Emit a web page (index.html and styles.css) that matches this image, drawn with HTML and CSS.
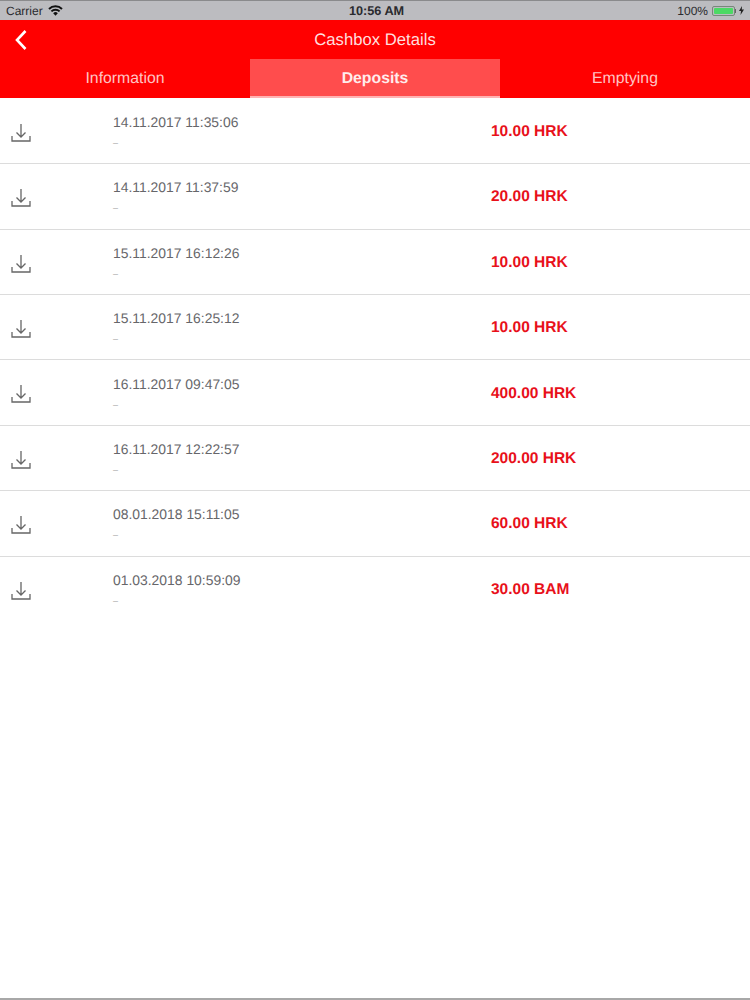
FILE: index.html
```html
<!DOCTYPE html>
<html lang="en">
<head>
    <meta charset="UTF-8">
    <title>Cashbox Details</title>
    <link rel="stylesheet" href="styles.css">
</head>
<body>
    <!-- Status bar -->
    <div class="status-bar">
        <div class="status-left">
            <span>Carrier</span>
            <svg class="wifi" width="15" height="11" viewBox="0 0 15 11">
                <path d="M1 4a9.2 9.2 0 0 1 13 0" fill="none" stroke="#111" stroke-width="2"/>
                <path d="M3.4 6.400a5.800 5.800 0 0 1 8.200 0" fill="none" stroke="#111" stroke-width="2"/>
                <path d="M5.200 8.200a3.200 3.200 0 0 1 4.600 0L7.500 10.800z" fill="#111"/>
            </svg>
        </div>
        <div class="status-time">10:56 AM</div>
        <div class="status-right">
            <span>100%</span>
            <div class="battery"><div class="battery-fill"></div></div>
            <div class="battery-cap"></div>
            <svg width="5" height="9" viewBox="0 0 5 9"><path d="M3 0 0 5h2l-.5 4L5 3.6H2.800z" fill="#222"/></svg>
        </div>
    </div>

    <!-- Header -->
    <div class="nav-bar">
        <svg class="back" width="14" height="22" viewBox="0 0 14 22">
            <path d="M11.500 2 3 11l8.500 9" fill="none" stroke="#fff" stroke-width="2.600"/>
        </svg>
        <div class="nav-title">Cashbox Details</div>
    </div>

    <!-- Tabs -->
    <div class="tabs">
        <div class="tab">Information</div>
        <div class="tab active">Deposits</div>
        <div class="tab">Emptying</div>
    </div>

    <!-- Deposits -->
    <div class="list">
        <div class="row">
            <svg class="row-icon" width="20" height="20" viewBox="0 0 20 20"><path d="M10 1v13M5.500 9.500 10 14l4.500-4.500M1 13v5h18v-5" fill="none" stroke="#666" stroke-width="1.300"/></svg>
            <div class="row-info"><div class="row-date">14.11.2017 11:35:06</div><div class="row-note">–</div></div>
            <div class="row-amount">10.00 HRK</div>
        </div>
        <div class="row">
            <svg class="row-icon" width="20" height="20" viewBox="0 0 20 20"><path d="M10 1v13M5.500 9.500 10 14l4.500-4.500M1 13v5h18v-5" fill="none" stroke="#666" stroke-width="1.300"/></svg>
            <div class="row-info"><div class="row-date">14.11.2017 11:37:59</div><div class="row-note">–</div></div>
            <div class="row-amount">20.00 HRK</div>
        </div>
        <div class="row">
            <svg class="row-icon" width="20" height="20" viewBox="0 0 20 20"><path d="M10 1v13M5.500 9.500 10 14l4.500-4.500M1 13v5h18v-5" fill="none" stroke="#666" stroke-width="1.300"/></svg>
            <div class="row-info"><div class="row-date">15.11.2017 16:12:26</div><div class="row-note">–</div></div>
            <div class="row-amount">10.00 HRK</div>
        </div>
        <div class="row">
            <svg class="row-icon" width="20" height="20" viewBox="0 0 20 20"><path d="M10 1v13M5.500 9.500 10 14l4.500-4.500M1 13v5h18v-5" fill="none" stroke="#666" stroke-width="1.300"/></svg>
            <div class="row-info"><div class="row-date">15.11.2017 16:25:12</div><div class="row-note">–</div></div>
            <div class="row-amount">10.00 HRK</div>
        </div>
        <div class="row">
            <svg class="row-icon" width="20" height="20" viewBox="0 0 20 20"><path d="M10 1v13M5.500 9.500 10 14l4.500-4.500M1 13v5h18v-5" fill="none" stroke="#666" stroke-width="1.300"/></svg>
            <div class="row-info"><div class="row-date">16.11.2017 09:47:05</div><div class="row-note">–</div></div>
            <div class="row-amount">400.00 HRK</div>
        </div>
        <div class="row">
            <svg class="row-icon" width="20" height="20" viewBox="0 0 20 20"><path d="M10 1v13M5.500 9.500 10 14l4.500-4.500M1 13v5h18v-5" fill="none" stroke="#666" stroke-width="1.300"/></svg>
            <div class="row-info"><div class="row-date">16.11.2017 12:22:57</div><div class="row-note">–</div></div>
            <div class="row-amount">200.00 HRK</div>
        </div>
        <div class="row">
            <svg class="row-icon" width="20" height="20" viewBox="0 0 20 20"><path d="M10 1v13M5.500 9.500 10 14l4.500-4.500M1 13v5h18v-5" fill="none" stroke="#666" stroke-width="1.300"/></svg>
            <div class="row-info"><div class="row-date">08.01.2018 15:11:05</div><div class="row-note">–</div></div>
            <div class="row-amount">60.00 HRK</div>
        </div>
        <div class="row last">
            <svg class="row-icon" width="20" height="20" viewBox="0 0 20 20"><path d="M10 1v13M5.500 9.500 10 14l4.500-4.500M1 13v5h18v-5" fill="none" stroke="#666" stroke-width="1.300"/></svg>
            <div class="row-info"><div class="row-date">01.03.2018 10:59:09</div><div class="row-note">–</div></div>
            <div class="row-amount">30.00 BAM</div>
        </div>
    </div>

    <div class="bottom-line"></div>
</body>
</html>
```

FILE: styles.css
```css
html, body { height: 100%; }
body { font-family: "Liberation Sans", Arial, sans-serif; margin: 0; padding: 0; background: #fff; display: flex; flex-direction: column; height: 1000px; overflow: hidden; text-rendering: geometricPrecision; }

.status-bar { height: 19px; flex: none; display: grid; grid-template-columns: 1fr auto 1fr; align-items: center; padding: 0 6px; background: #bcbcc0; border-top: 1px solid #8a8a8c; font-size: 12px; color: #2a2a2e; }
.status-left { display: flex; align-items: center; gap: 5px; }
.status-time { font-weight: bold; font-size: 12.700px; margin-left: 3px; }
.status-right { display: flex; align-items: center; justify-content: flex-end; }
.battery { width: 23px; height: 10px; margin-left: 4px; padding: 1px; border: 1px solid #77887a; border-radius: 2px; box-sizing: border-box; }
.battery-fill { height: 100%; background: #4cd964; border-radius: 1px; }
.battery-cap { width: 1px; height: 4px; margin-right: 3px; background: #666; }

.nav-bar { height: 39px; flex: none; position: relative; display: flex; align-items: center; justify-content: center; background: #ff0000; }
.nav-title { color: #ffdede; font-size: 16.700px; }
.back { position: absolute; left: 14px; top: 9px; }

.tabs { height: 39px; flex: none; display: grid; grid-template-columns: repeat(3, 1fr); background: #ff0000; }
.tab { display: flex; align-items: center; justify-content: center; padding-top: 1px; box-sizing: border-box; color: #ffc4c4; font-size: 15.800px; }
.tab.active { background: #ff4d4d; color: #ffecec; font-weight: bold; font-size: 15.800px; padding-top: 2px; border-bottom: 2px solid #ffb3b3; }

.list { flex: 1; padding-top: 0.800px; }
.row { height: 65.400px; box-sizing: border-box; display: flex; border-bottom: 1px solid #dcdcdc; position: relative; }
.row.last { border-bottom: none; }
.row-icon { position: absolute; left: 11px; top: 24px; }
.row-info { margin-left: 113px; width: 378px; padding-top: 15.200px; }
.row-date { color: #66666a; font-size: 13.900px; line-height: 16px; }
.row-note { color: #a8a8a8; font-size: 9px; line-height: 12px; margin-top: 7px; }
.row-amount { color: #e8101a; font-size: 15.500px; font-weight: bold; padding-top: 24.300px; line-height: 18px; }

.bottom-line { height: 2px; flex: none; background: #a8a8a8; }
```
